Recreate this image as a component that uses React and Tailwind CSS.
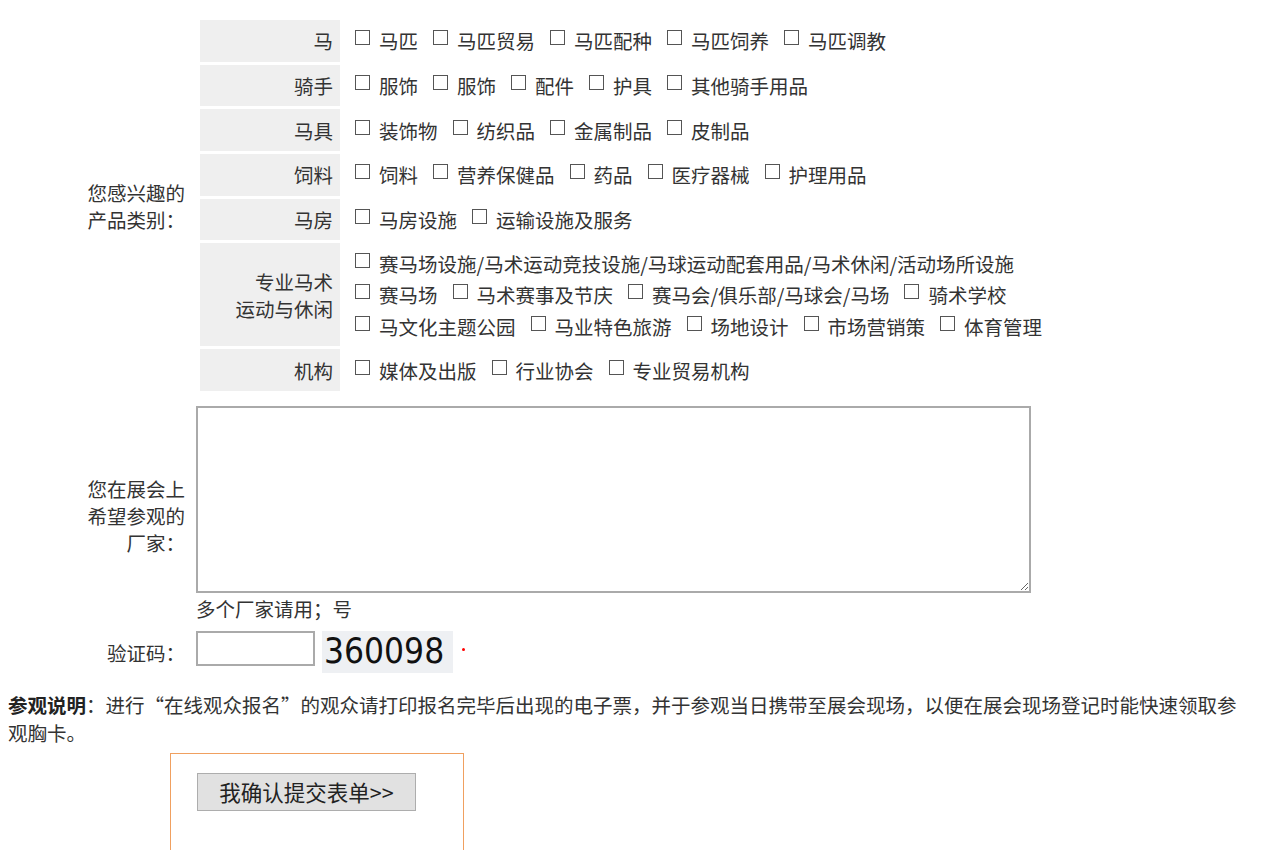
import React from "react";

const groups = [
  { name: "马", items: ["马匹", "马匹贸易", "马匹配种", "马匹饲养", "马匹调教"] },
  { name: "骑手", items: ["服饰", "服饰", "配件", "护具", "其他骑手用品"] },
  { name: "马具", items: ["装饰物", "纺织品", "金属制品", "皮制品"] },
  { name: "饲料", items: ["饲料", "营养保健品", "药品", "医疗器械", "护理用品"] },
  { name: "马房", items: ["马房设施", "运输设施及服务"] },
];

const sportLines = [
  ["赛马场设施/马术运动竞技设施/马球运动配套用品/马术休闲/活动场所设施"],
  ["赛马场", "马术赛事及节庆", "赛马会/俱乐部/马球会/马场", "骑术学校"],
  ["马文化主题公园", "马业特色旅游", "场地设计", "市场营销策", "体育管理"],
];

function Check({ label }) {
  return (
    <label className="flex items-center mr-[15px] whitespace-nowrap">
      <span className="block w-[15px] h-[15px] border border-[#555] bg-white mr-[9px] -mt-[6px] shrink-0" />
      <span>{label}</span>
    </label>
  );
}

function Row({ name, children, tall }) {
  return (
    <div className="flex gap-[3px]">
      <div
        className={
          "w-[140px] shrink-0 bg-[#efefef] flex items-center justify-end text-right pr-[7px] " +
          (tall ? "leading-[27px] min-h-[103px]" : "h-[41.7px]")
        }
      >
        {name}
      </div>
      <div className={"pl-[12px] flex flex-col justify-center " + (tall ? "" : "h-[41.7px]")}>{children}</div>
    </div>
  );
}

export default function App() {
  return (
    <div className="bg-white text-[#333] text-[19.5px] font-['Microsoft_YaHei','Noto_Sans_CJK_SC',sans-serif] min-h-[850px] overflow-hidden">
      <div className="flex pt-[20px]">
        <div className="w-[197px] shrink-0 flex items-center justify-end pr-[12px] leading-[27px] text-left">
          <div>
            您感兴趣的
            <br />
            产品类别：
          </div>
        </div>
        <div className="flex flex-col gap-[3px] pl-[3px]">
          {groups.map((g) => (
            <Row key={g.name} name={g.name}>
              <div className="flex">
                {g.items.map((it, i) => (
                  <Check key={i} label={it} />
                ))}
              </div>
            </Row>
          ))}
          <Row
            tall
            name={
              <span>
                专业马术
                <br />
                运动与休闲
              </span>
            }
          >
            <div className="leading-[31.5px]">
              {sportLines.map((line, i) => (
                <div key={i} className="flex">
                  {line.map((it, j) => (
                    <Check key={j} label={it} />
                  ))}
                </div>
              ))}
            </div>
          </Row>
          <Row name="机构">
            <div className="flex">
              {["媒体及出版", "行业协会", "专业贸易机构"].map((it, i) => (
                <Check key={i} label={it} />
              ))}
            </div>
          </Row>
        </div>
      </div>

      <div className="flex mt-[15px]">
        <div className="w-[196px] shrink-0 flex items-center justify-end pr-[11px] leading-[27px] text-right">
          <div>
            您在展会上
            <br />
            希望参观的
            <br />
            厂家：
          </div>
        </div>
        <div>
          <textarea className="block w-[835px] h-[187px] border-2 border-[#aaa] resize bg-white outline-none" />
          <div className="leading-[32px]">多个厂家请用；号</div>
        </div>
      </div>

      <div className="flex mt-[6px] items-start">
        <div className="w-[196px] shrink-0 h-[42px] flex items-center justify-end pr-[11px]">
          验证码：
        </div>
        <input className="w-[119px] h-[35px] border-2 border-[#aaa] bg-white outline-none" />
        <div className="ml-[7px] w-[131px] h-[42px] bg-[#eef0f3] font-['DejaVu_Sans_Condensed','Liberation_Sans',sans-serif] text-[35px] leading-[40px] text-[#111] pl-[2px]">
          360098
        </div>
        <span className="ml-[9px] mt-[17px] w-[3px] h-[3px] rounded-full bg-[#f00]" />
      </div>

      <div className="mt-[18px] pl-[8px] leading-[28px]">
        <div className="whitespace-nowrap">
          <b className="font-bold text-[#222]">参观说明</b>：进行“在线观众报名”的观众请打印报名完毕后出现的电子票，并于参观当日携带至展会现场，以便在展会现场登记时能快速领取参
        </div>
        <div>观胸卡。</div>
      </div>

      <div className="ml-[170px] mt-[6px] w-[294px] h-[120px] border border-[#f0a060] pt-[19px] pl-[26px]">
        <button className="w-[219px] h-[38px] bg-[#e1e1e1] border border-[#adadad] text-[21.5px] text-[#222]">
          我确认提交表单&gt;&gt;
        </button>
      </div>
    </div>
  );
}
